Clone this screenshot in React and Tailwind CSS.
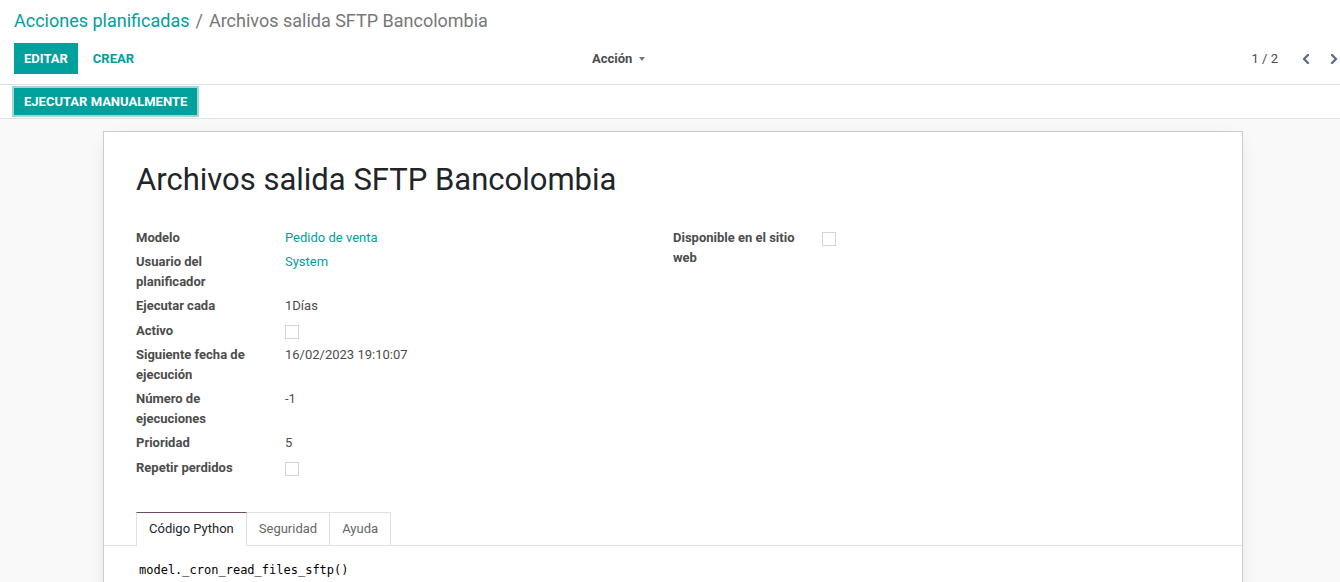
import { ChevronLeft, ChevronRight } from 'lucide-react'

const font = { fontFamily: 'Roboto, "Noto Sans", sans-serif' }

function Checkbox() {
  return <span className="inline-block w-[14px] h-[14px] border border-[#d4d4d4] bg-white align-middle" />
}

function Row({ label, children, box }) {
  const pad = box ? 'pt-[3px] pb-[2px]' : 'py-[2px]'
  return (
    <tr>
      <td className={`w-[149px] align-top font-bold text-[#4c4c4c] ${pad}`}>
        <div className="max-w-[128px]">{label}</div>
      </td>
      <td className={`align-top text-[#4c4c4c] ${pad}`}>{children}</td>
    </tr>
  )
}

export default function App() {
  return (
    <div className="w-[1340px] h-[582px] overflow-hidden bg-[#f9f9f9] text-[13px] leading-[20px] text-[#4c4c4c]" style={font}>
      <div className="bg-white border-b border-[#dee2e6]">
        <div className="px-[14px] pt-[8px]">
          <div className="text-[18px] leading-[25px] text-[#777]">
            <span className="text-[#00A09D]">Acciones planificadas</span>
            <span className="mx-[6px]">/</span>
            <span>Archivos salida SFTP Bancolombia</span>
          </div>
          <div className="flex items-center h-[31px] mt-[10px] mb-[10px]">
            <div className="w-[578px] flex items-center gap-[1px]">
              <button className="bg-[#00A09D] text-white font-bold h-[31px] px-[10px] text-[13px]">EDITAR</button>
              <button className="text-[#00A09D] font-bold h-[31px] px-[14px] text-[13px]">CREAR</button>
            </div>
            <button className="flex items-center gap-[7px] font-bold text-[#4c4c4c]">
              Acción
              <span className="inline-block w-0 h-0 border-l-[3px] border-r-[3px] border-t-[4px] border-l-transparent border-r-transparent border-t-[#777]" />
            </button>
            <div className="flex-1 flex justify-end items-center text-[#4c4c4c]">
              <span className="mr-[20px]">1 / 2</span>
              <ChevronLeft size={16} strokeWidth={3.5} className="text-[#5c6b7c] mr-[12px]" />
              <ChevronRight size={16} strokeWidth={3.5} className="text-[#5c6b7c] mr-[-16px]" />
            </div>
          </div>
        </div>
      </div>
      <div className="bg-white border-b border-[#dee2e6] h-[34px] flex items-center px-[14px]">
        <button className="bg-[#00A09D] text-white font-bold text-[13px] h-[27px] px-[10px] outline outline-[2px] outline-[#9fd9d7]">EJECUTAR MANUALMENTE</button>
      </div>
      <div className="pt-[12px] pl-[103px] pr-[97px]">
        <div className="bg-white border border-[#c9ccd2] shadow-[0_5px_20px_-8px_rgba(0,0,0,0.18)] h-[500px] px-[32px] pt-[28px]">
          <h1 className="text-[31px] leading-[40px] text-[#212529] mb-[26px]">Archivos salida SFTP Bancolombia</h1>
          <div className="grid grid-cols-2">
            <table className="border-collapse w-full">
              <tbody>
                <Row label="Modelo"><span className="text-[#00A09D]">Pedido de venta</span></Row>
                <Row label="Usuario del planificador"><span className="text-[#00A09D]">System</span></Row>
                <Row label="Ejecutar cada">1Días</Row>
                <Row label="Activo" box><Checkbox /></Row>
                <Row label="Siguiente fecha de ejecución">16/02/2023 19:10:07</Row>
                <Row label="Número de ejecuciones">-1</Row>
                <Row label="Prioridad">5</Row>
                <Row label="Repetir perdidos" box><Checkbox /></Row>
              </tbody>
            </table>
            <table className="border-collapse w-full self-start">
              <tbody>
                <Row label="Disponible en el sitio web"><Checkbox /></Row>
              </tbody>
            </table>
          </div>
          <div className="mt-[32px] -mx-[32px] px-[32px] border-b border-[#dee2e6] flex">
            <div className="h-[34px] px-[12px] flex items-center border-t-[1px] border-t-[#714B67] border-x border-x-[#dee2e6] bg-white text-[#212529] -mb-[1px] pb-[1px]">Código Python</div>
            <div className="h-[33px] px-[12px] flex items-center border border-[#dee2e6] border-l-0 border-b-0 text-[#666]">Seguridad</div>
            <div className="h-[33px] px-[12px] flex items-center border border-[#dee2e6] border-l-0 border-b-0 text-[#666]">Ayuda</div>
          </div>
          <div className="pt-[14px] pl-[3px] text-[12px] text-black" style={{ fontFamily: '"DejaVu Sans Mono", monospace' }}>
            model._cron_read_files_sftp()
          </div>
        </div>
      </div>
    </div>
  )
}
